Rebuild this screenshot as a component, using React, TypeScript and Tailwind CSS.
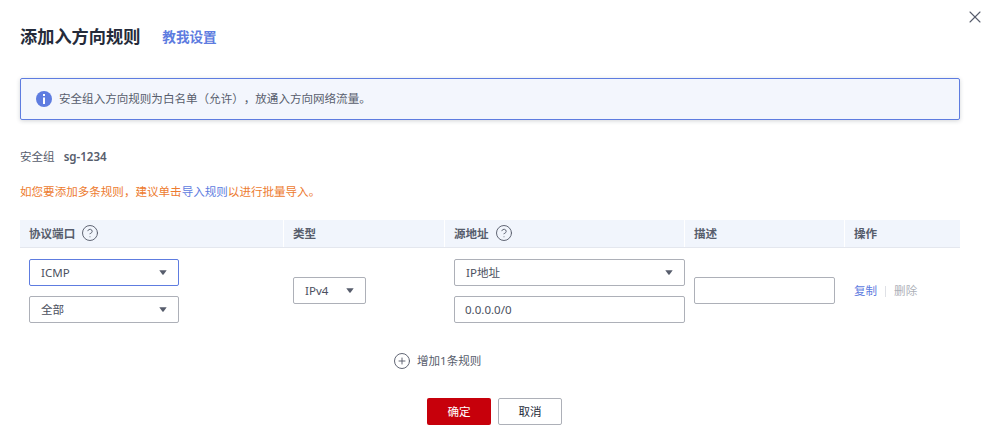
import { CircleHelp, CirclePlus, X } from "lucide-react";

const font = '"Noto Sans", "Noto Sans CJK SC", sans-serif';

function Caret() {
  return (
    <svg width="8" height="5" viewBox="0 0 8 5" className="shrink-0">
      <path d="M0.3 0.2H7.7L4.6 4.4Q4 5 3.4 4.4Z" fill="#575d6c" />
    </svg>
  );
}

function Select({
  value,
  active,
  className,
}: {
  value: string;
  active?: boolean;
  className: string;
}) {
  return (
    <div
      className={`flex h-[27px] items-center justify-between rounded-[2px] border pl-[11px] pr-[11px] ${
        active ? "border-[#5e7ce0]" : "border-[#adb0b8]"
      } ${className}`}
    >
      <span className="text-[#4b505e]">{value}</span>
      <Caret />
    </div>
  );
}

function HeadCell({ label, help, className }: { label: string; help?: boolean; className: string }) {
  return (
    <div className={`flex items-center gap-[6px] border-r border-white pl-[9px] font-semibold text-[#575d6c] ${className}`}>
      <span>{label}</span>
      {help && <CircleHelp size={18} strokeWidth={1.25} className="-mt-[2px] text-[#575d6c]" />}
    </div>
  );
}

export default function App() {
  return (
    <div
      className="relative h-[448px] w-[989px] overflow-hidden bg-white text-[11.55px] text-[#575d6c] [text-spacing-trim:space-all]"
      style={{ fontFamily: font }}
    >
      <button className="absolute right-[4px] top-[7px] text-[#575d6c]">
        <X size={20} strokeWidth={1.3} />
      </button>

      <div className="w-[960px] pl-[20px] pt-[26px]">
        {/* Header */}
        <div className="flex h-[22px] items-center gap-[22px]">
          <h2 className="text-[17.2px] font-bold text-[#252b3a]">添加入方向规则</h2>
          <a className="text-[13.6px] font-bold text-[#5e7ce0]">教我设置</a>
        </div>

        {/* Notice */}
        <div className="mt-[30px] flex h-[42px] items-center gap-[7px] rounded-[2px] border border-[#5e7ce0] bg-[#f3f6fd] pl-[15px] shadow-[0_1px_4px_rgba(37,43,58,0.2)]">
          <svg width="16" height="16" viewBox="0 0 16 16" className="shrink-0">
            <circle cx="8" cy="8" r="8" fill="#5e7ce0" />
            <rect x="7" y="3" width="2" height="2" fill="#fff" />
            <rect x="7" y="6.5" width="2" height="6.5" fill="#fff" />
          </svg>
          <span>安全组入方向规则为白名单（允许），放通入方向网络流量。</span>
        </div>

        <div className="mt-[29px] flex h-[16px] items-center gap-[9px]">
          <span>安全组</span>
          <span className="font-semibold">sg-1234</span>
        </div>

        <p className="mt-[19px] h-[16px] leading-[16px] text-[#ed7b2f]">
          如您要添加多条规则，建议单击<a className="text-[#5e7ce0]">导入规则</a>以进行批量导入。
        </p>

        {/* Rules table */}
        <div className="mt-[20px] flex h-[28px] border-b border-[#e4e7ee] bg-[#f1f5fc]">
          <HeadCell label="协议端口" help className="w-[264px]" />
          <HeadCell label="类型" className="w-[161px]" />
          <HeadCell label="源地址" help className="w-[240px]" />
          <HeadCell label="描述" className="w-[160px]" />
          <HeadCell label="操作" className="flex-1 border-r-0" />
        </div>

        <div className="flex pt-[11px]">
          <div className="flex w-[264px] flex-col gap-[10px] pl-[9px]">
            <Select value="ICMP" active className="w-[150px]" />
            <Select value="全部" className="w-[150px]" />
          </div>
          <div className="flex w-[161px] items-center pb-px pl-[9px]">
            <Select value="IPv4" className="w-[73px]" />
          </div>
          <div className="flex w-[240px] flex-col gap-[10px] pl-[9px]">
            <Select value="IP地址" className="w-[231px]" />
            <input
              readOnly
              value="0.0.0.0/0"
              className="h-[27px] w-[231px] rounded-[2px] border border-[#adb0b8] pl-[10px] text-[#4b505e] outline-none"
            />
          </div>
          <div className="flex w-[160px] items-center pb-px pl-[9px]">
            <input readOnly className="h-[27px] w-[141px] rounded-[2px] border border-[#adb0b8] outline-none" />
          </div>
          <div className="flex flex-1 items-center pl-[9px]">
            <a className="text-[#5e7ce0]">复制</a>
            <span className="mx-[8px] h-[11px] w-px bg-[#dfe1e6]" />
            <a className="text-[#adb0b8]">删除</a>
          </div>
        </div>

        <div className="mt-[28px] flex h-[20px] items-center gap-[6px] pl-[373px]">
          <CirclePlus size={18} strokeWidth={1.25} className="text-[#575d6c]" />
          <span>增加1条规则</span>
        </div>

        <div className="mt-[27px] flex gap-[7px] pl-[407px]">
          <button className="h-[27px] w-[64px] rounded-[2px] bg-[#c7000b] text-white">确定</button>
          <button className="h-[27px] w-[64px] rounded-[2px] border border-[#adb0b8] text-[#252b3a]">取消</button>
        </div>
      </div>
    </div>
  );
}
